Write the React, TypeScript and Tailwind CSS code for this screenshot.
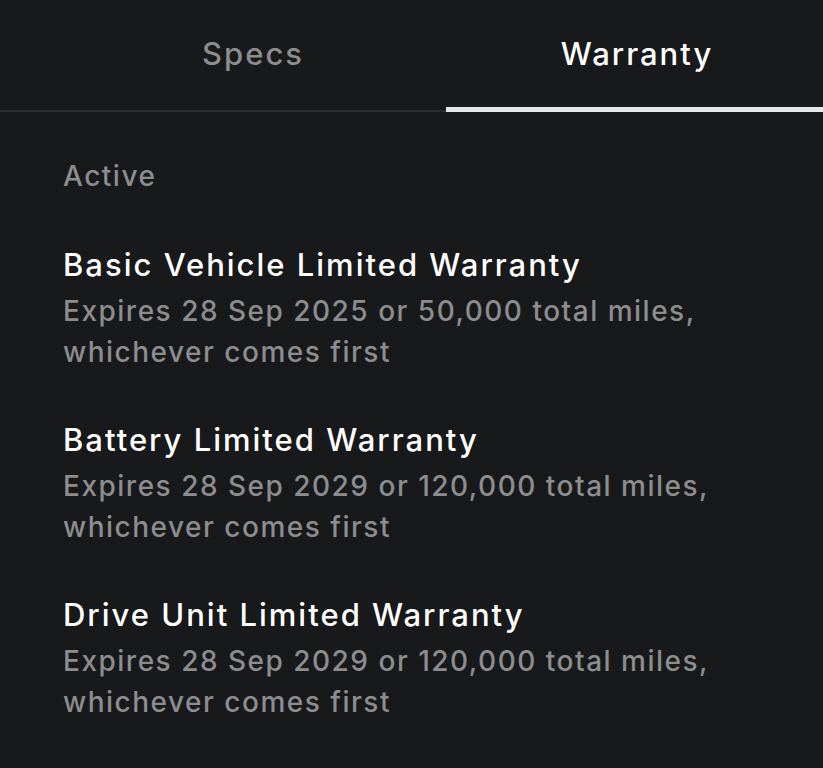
const warranties = [
  {
    title: "Basic Vehicle Limited Warranty",
    detail: "Expires 28 Sep 2025 or 50,000 total miles, whichever comes first"
  },
  {
    title: "Battery Limited Warranty",
    detail: "Expires 28 Sep 2029 or 120,000 total miles, whichever comes first"
  },
  {
    title: "Drive Unit Limited Warranty",
    detail: "Expires 28 Sep 2029 or 120,000 total miles, whichever comes first"
  }
];

export default function App() {
  return (
    <div className="min-h-[768px] w-[823px] overflow-hidden bg-[#17191b] font-['Inter',sans-serif] antialiased">
      <nav className="flex h-[112px] border-b-2 border-[#2c2e30]">
        <button className="flex flex-1 items-center justify-center pb-[2px] pl-[60px] text-[31px] font-medium tracking-[2px] text-[#8c8d8f]">
          Specs
        </button>
        <button className="relative flex w-[377px] items-center justify-center pb-[2px] pl-[5px] text-[31px] font-medium tracking-[2px] text-white">
          Warranty
          <span className="absolute inset-x-0 -bottom-[2px] h-[5px] bg-[#e6e6e6]" />
        </button>
      </nav>

      <section className="px-[63px] pt-[46px]">
        <p className="text-[28px] font-medium leading-[36px] tracking-[1.5px] text-[#8c8d8f]">Active</p>
        <ul className="mt-[51px] flex flex-col gap-[47px]">
          {warranties.map((item) => (
            <li key={item.title}>
              <h3 className="text-[31px] font-medium leading-[40px] tracking-[2px] text-white">{item.title}</h3>
              <p className="mt-[6px] max-w-[700px] text-[28px] font-medium leading-[41px] tracking-[1.5px] text-[#8c8d8f]">
                {item.detail}
              </p>
            </li>
          ))}
        </ul>
      </section>
    </div>
  );
}
